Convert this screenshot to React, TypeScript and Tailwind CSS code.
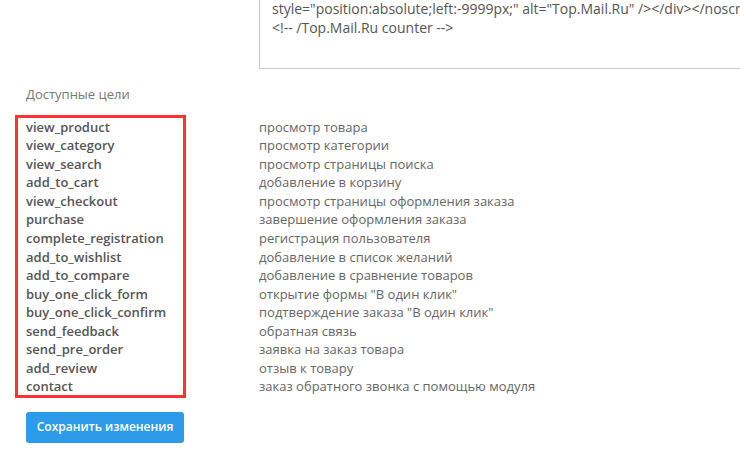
const goals: [string, string][] = [
  ["view_product", "просмотр товара"],
  ["view_category", "просмотр категории"],
  ["view_search", "просмотр страницы поиска"],
  ["add_to_cart", "добавление в корзину"],
  ["view_checkout", "просмотр страницы оформления заказа"],
  ["purchase", "завершение оформления заказа"],
  ["complete_registration", "регистрация пользователя"],
  ["add_to_wishlist", "добавление в список желаний"],
  ["add_to_compare", "добавление в сравнение товаров"],
  ["buy_one_click_form", 'открытие формы "В один клик"'],
  ["buy_one_click_confirm", 'подтверждение заказа "В один клик"'],
  ["send_feedback", "обратная связь"],
  ["send_pre_order", "заявка на заказ товара"],
  ["add_review", "отзыв к товару"],
  ["contact", "заказ обратного звонка с помощью модуля"],
];

const App = () => {
  return (
    <div
      className="w-[740px] h-[464px] overflow-hidden bg-white text-[13px] leading-[18.57px] text-[#666]"
      style={{ fontFamily: '"Open Sans", "Liberation Sans", sans-serif' }}
    >
      <div className="flex">
        <div className="w-[259px] shrink-0" />
        <div className="flex-1 h-[69px] border-l border-b border-[#c8c8c8] pl-[12px] pt-0 text-[14px] leading-[18.57px] text-[#555] whitespace-nowrap overflow-hidden">
          <div>style="position:absolute;left:-9999px;" alt="Top.Mail.Ru" /&gt;&lt;/div&gt;&lt;/noscript&gt;</div>
          <div>&lt;!-- /Top.Mail.Ru counter --&gt;</div>
        </div>
      </div>

      <div className="pl-[26px] mt-[16px] text-[#777]">Доступные цели</div>

      <div className="relative mt-[14px]">
        <div className="absolute left-[15px] top-[-3px] w-[171px] h-[283px] border-[3px] border-[#ff3333] pointer-events-none" />
        {goals.map(([code, label]) => (
          <div key={code} className="flex">
            <div className="w-[233px] ml-[26px] shrink-0 font-semibold text-[#555]">{code}</div>
            <div className="text-[#666]">{label}</div>
          </div>
        ))}
      </div>

      <div className="pl-[26px] mt-[16px]">
        <button className="w-[158px] h-[31px] rounded-[3px] bg-[#2d9be9] text-white text-[12px] font-semibold">
          Сохранить изменения
        </button>
      </div>
    </div>
  );
};

export default App;
